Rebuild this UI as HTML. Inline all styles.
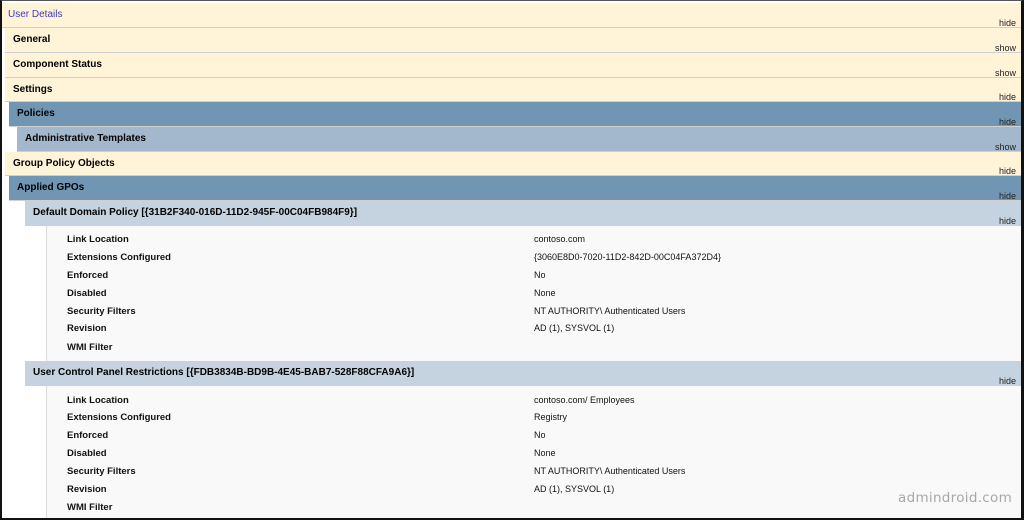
<!DOCTYPE html>
<html><head><meta charset="utf-8"><style>
*{margin:0;padding:0;box-sizing:border-box}
body{width:1024px;height:520px;overflow:hidden;background:#fff;font-family:"Liberation Sans",Arial,sans-serif;position:relative}
.frame{position:absolute;left:0;top:0;width:1024px;height:520px;border:2px solid #111;border-top:1px solid #555;border-right:3px solid #111;}
.r{position:absolute;right:3px;height:25px;border-bottom:1px solid #d0d0d0;font-size:10px;font-weight:bold;color:#000;padding:6px 0 0 8px}
.r span{position:absolute;right:5px;bottom:-1px;font-size:9px;font-weight:normal;color:#222}
.c{background:#fff3d8}
.b1{background:#7196b3}
.b2{background:#a3b8cc}
.b3{background:#c5d2df}
.d{position:absolute;left:46px;right:3px;background:#f9f9f9;border-left:1px solid #ddd}
.l{position:absolute;left:67px;font-size:9.5px;font-weight:bold;color:#111}
.v{position:absolute;left:534px;font-size:9px;color:#111}
.wm{position:absolute;left:898px;top:490px;font-size:13.5px;color:#a8a8a8;letter-spacing:0.3px;font-family:"DejaVu Sans",sans-serif}
</style></head><body>
<div class="r c" style="left:2px;top:3px;height:25px;color:#3a3ad0;font-weight:normal;padding-left:6px">User Details<span>hide</span></div>
<div class="r c" style="left:5px;top:28px">General<span>show</span></div>
<div class="r c" style="left:5px;top:53px">Component Status<span>show</span></div>
<div class="r c" style="left:5px;top:78px;height:24px">Settings<span>hide</span></div>
<div class="r b1" style="left:9px;top:102px">Policies<span>hide</span></div>
<div class="r b2" style="left:17px;top:127px">Administrative Templates<span>show</span></div>
<div class="r c" style="left:5px;top:152px;height:24px">Group Policy Objects<span>hide</span></div>
<div class="r b1" style="left:9px;top:176px">Applied GPOs<span>hide</span></div>
<div class="r b3" style="left:25px;top:201px">Default Domain Policy [{31B2F340-016D-11D2-945F-00C04FB984F9}]<span>hide</span></div>
<div class="d" style="top:226px;height:135px"></div>
<div class="r b3" style="left:25px;top:361px">User Control Panel Restrictions [{FDB3834B-BD9B-4E45-BAB7-528F88CFA9A6}]<span>hide</span></div>
<div class="d" style="top:386px;height:134px"></div>

<div class="l" style="top:234px">Link Location</div><div class="v" style="top:234px">contoso.com</div>
<div class="l" style="top:252px">Extensions Configured</div><div class="v" style="top:252px">{3060E8D0-7020-11D2-842D-00C04FA372D4}</div>
<div class="l" style="top:270px">Enforced</div><div class="v" style="top:270px">No</div>
<div class="l" style="top:288px">Disabled</div><div class="v" style="top:288px">None</div>
<div class="l" style="top:306px">Security Filters</div><div class="v" style="top:306px">NT AUTHORITY\ Authenticated Users</div>
<div class="l" style="top:323px">Revision</div><div class="v" style="top:323px">AD (1), SYSVOL (1)</div>
<div class="l" style="top:342px">WMI Filter</div>

<div class="l" style="top:395px">Link Location</div><div class="v" style="top:395px">contoso.com/ Employees</div>
<div class="l" style="top:412px">Extensions Configured</div><div class="v" style="top:412px">Registry</div>
<div class="l" style="top:430px">Enforced</div><div class="v" style="top:430px">No</div>
<div class="l" style="top:448px">Disabled</div><div class="v" style="top:448px">None</div>
<div class="l" style="top:466px">Security Filters</div><div class="v" style="top:466px">NT AUTHORITY\ Authenticated Users</div>
<div class="l" style="top:484px">Revision</div><div class="v" style="top:484px">AD (1), SYSVOL (1)</div>
<div class="l" style="top:502px">WMI Filter</div>
<div class="wm">admindroid.com</div>
<div class="frame"></div>
</body></html>
